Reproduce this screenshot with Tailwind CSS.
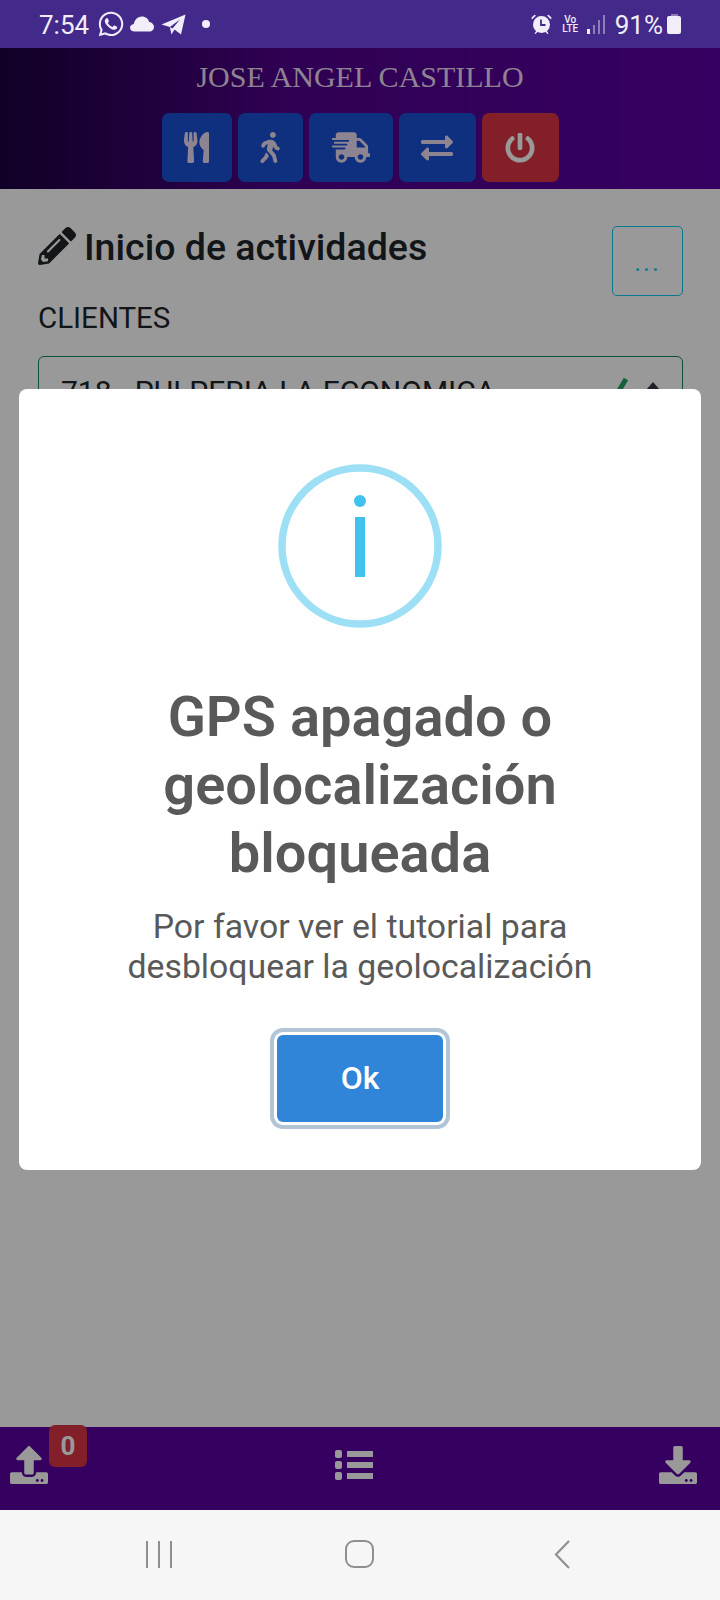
<!DOCTYPE html>
<html>
<head>
    <meta charset="UTF-8" />
    <title>Inicio de actividades</title>
    <script src="https://cdn.jsdelivr.net/npm/@tailwindcss/browser@4"></script>
</head>
<body class="flex flex-col h-[1600px] w-[720px] overflow-hidden bg-white font-['Roboto',sans-serif]">

    <!-- Status bar -->
    <div class="h-12 shrink-0 bg-[#432a8a] flex items-center text-[#f1edf9]">
        <span class="ml-[39px] mt-[2px] text-[26px] leading-none font-normal">7:54</span>
        <svg class="ml-[9px] w-[26px] h-[28px]" viewBox="0 0 448 512" fill="currentColor"><path d="M380.9 97.1C339 55.1 283.2 32 223.9 32c-122.4 0-222 99.6-222 222 0 39.1 10.2 77.3 29.6 111L0 480l117.7-30.9c32.4 17.7 68.9 27 106.1 27h.1c122.3 0 224.1-99.6 224.1-222 0-59.3-25.2-115-67.1-157zm-157 341.6c-33.2 0-65.7-8.9-94-25.7l-6.7-4-69.8 18.3L72 359.2l-4.4-7c-18.5-29.4-28.2-63.3-28.2-98.2 0-101.7 82.8-184.5 184.6-184.5 49.3 0 95.6 19.2 130.4 54.1 34.8 34.9 56.2 81.2 56.1 130.5 0 101.8-84.9 184.6-186.6 184.6zm101.2-138.2c-5.5-2.8-32.8-16.2-37.9-18-5.1-1.9-8.8-2.8-12.5 2.8-3.7 5.6-14.3 18-17.6 21.8-3.2 3.7-6.5 4.2-12 1.4-32.6-16.3-54-29.1-75.5-66-5.7-9.8 5.7-9.1 16.3-30.3 1.8-3.7.9-6.9-.5-9.7-1.4-2.8-12.5-30.1-17.1-41.2-4.5-10.8-9.1-9.3-12.5-9.5-3.2-.2-6.9-.2-10.6-.2-3.7 0-9.7 1.4-14.8 6.9-5.1 5.6-19.4 19-19.4 46.3 0 27.3 19.9 53.7 22.6 57.4 2.8 3.7 39.1 59.7 94.8 83.8 35.2 15.2 49 16.5 66.6 13.9 10.7-1.6 32.8-13.4 37.4-26.4 4.6-13 4.6-24.1 3.2-26.4-1.3-2.5-5-3.9-10.5-6.6z"/></svg>
        <svg class="ml-[6px] w-[24px] h-[16px]" viewBox="0 0 24 16" fill="currentColor"><path d="M4.5 15.5C2 15.5 0 13.800 0 11.700 0 9.700 1.700 8.200 3.800 8 4.500 3.500 8 .5 12 .5c3.500 0 6.300 2.300 7.200 5.500 2.700.2 4.800 2.600 4.800 5 0 2.400-2 4.500-4.600 4.500z"/></svg>
        <svg class="ml-[7px] w-[25px] h-[21px]" viewBox="0 0 25 21" fill="currentColor"><path d="M24.500.500 20 20.500 13.500 15.500 10.500 20.500 8.800 13 .5 10.500zM8.800 13 19 5.500 11.500 14.500z" fill-rule="evenodd"/></svg>
        <span class="ml-[16px] w-2 h-2 rounded-full bg-[#f1edf9]"></span>

        <svg class="ml-auto w-[21px] h-[20px]" viewBox="0 0 21 20" fill="currentColor"><path d="M1 5.500 5 1.500 3.500.8.500 3.500zM20 5.500 16 1.500 17.500.8 20.500 3.500z"/><circle cx="10.500" cy="10.500" r="8.500"/><path d="M3.500 19.500 5.500 16.500 7 17.500 4.500 20zM17.500 19.500 15.500 16.500 14 17.500 16.500 20z"/><path d="M10 5.500v5.500h4.500" fill="none" stroke="#432a8a" stroke-width="1.800"/></svg>
        <div class="ml-[9px] w-[19px] flex flex-col items-center text-[10px] leading-[9px] font-medium"><span>Vo</span><span>LTE</span></div>
        <div class="ml-[7px] flex items-end gap-[3px] h-[19px]">
            <span class="w-[3px] h-[5px] bg-[#f1edf9]"></span>
            <span class="w-[2px] h-[9px] bg-[#8d7db8]"></span>
            <span class="w-[2px] h-[14px] bg-[#8d7db8]"></span>
            <span class="w-[2px] h-[19px] bg-[#8d7db8]"></span>
        </div>
        <span class="ml-[10px] mt-[2px] text-[26px] leading-none">91%</span>
        <div class="ml-[4px] mr-[39px] flex flex-col items-center">
            <span class="w-[7px] h-[2px] bg-[#8d7db8]"></span>
            <span class="w-[14px] h-[18px] rounded-[2px] bg-[#f1edf9]"></span>
        </div>
    </div>

    <!-- App -->
    <div class="relative flex-1 flex flex-col min-h-0">
        <header class="h-[141px] shrink-0 bg-linear-to-r from-[#1c0040] via-[#50008c] via-40% to-[#5b00a3] flex flex-col items-center">
            <h1 class="mt-[5px] h-[47px] text-[30px] leading-[47px] text-[#ecdcf4] font-['Liberation_Serif',serif]">JOSE ANGEL CASTILLO</h1>
            <div class="mt-[13px] flex gap-[6px] text-[#ecdcf4]">
                <button class="w-[70px] h-[69px] rounded-[7px] bg-[#1a50d4] flex items-center justify-center">
                    <svg class="w-[25px] h-[31px]" viewBox="0 0 416 512" fill="currentColor" preserveAspectRatio="none"><path d="M207.9 15.2c.8 4.700 16.100 94.500 16.100 128.800 0 52.300-27.800 89.600-68.900 104.600L168 486.700c.7 13.700-10.200 25.300-24 25.300H80c-13.700 0-24.700-11.500-24-25.300l12.900-238.100C27.700 233.600 0 196.200 0 144 0 109.600 15.300 19.900 16.100 15.200 19.300-5.100 61.400-5.400 64 16.300v141.200c1.300 3.400 15.100 3.200 16 0 1.400-25.300 7.900-139.200 8-141.800 3.300-20.800 44.700-20.800 47.900 0 .2 2.700 6.600 116.500 8 141.800.9 3.200 14.800 3.400 16 0V16.300c2.600-21.600 44.800-21.400 48-1.100zm119.200 285.700l-15 185.100c-1.200 14 9.900 26 23.900 26h56c13.300 0 24-10.700 24-24V24c0-13.200-10.700-24-24-24-82.500 0-221.400 178.500-64.900 300.900z"/></svg>
                </button>
                <button class="w-[65px] h-[69px] rounded-[7px] bg-[#1a50d4] flex items-center justify-center">
                    <svg class="w-[20px] h-[31px]" viewBox="0 0 320 512" fill="currentColor"><path d="M208 96c26.500 0 48-21.500 48-48S234.500 0 208 0s-48 21.500-48 48 21.500 48 48 48zm94.500 149.100l-23.300-11.800-9.700-29.400c-14.700-44.600-55.700-75.800-102.200-75.900-36-.1-55.900 10.100-93.300 25.200-21.600 8.700-39.300 25.200-49.700 46.200L17.600 213c-7.800 15.800-1.500 35 14.200 42.900 15.600 7.900 34.600 1.500 42.500-14.300L81 228c3.500-7 9.300-12.500 16.500-15.400l26.800-10.800-15.200 60.700c-5.200 20.800.4 42.900 14.900 58.800l59.900 65.400c7.200 7.900 12.300 17.400 14.900 27.700l18.300 73.300c4.300 17.100 21.700 27.600 38.800 23.300 17.100-4.300 27.600-21.700 23.300-38.800l-22.200-89c-2.600-10.300-7.700-19.900-14.900-27.700l-45.500-49.700 17.200-68.700 5.500 16.500c5.300 16.100 16.700 29.400 31.700 37l23.300 11.800c15.600 7.900 34.600 1.500 42.500-14.300 7.700-15.700 1.400-35.100-14.300-43zM73.600 385.800c-3.200 8.100-8 15.400-14.200 21.500l-50 50.100c-12.500 12.500-12.500 32.800 0 45.300s32.700 12.500 45.200 0l59.400-59.400c6.100-6.100 10.900-13.400 14.200-21.500l13.500-33.800c-55.300-60.300-38.700-41.800-47.400-53.700l-20.700 51.500z"/></svg>
                </button>
                <button class="w-[84px] h-[69px] rounded-[7px] bg-[#1a50d4] flex items-center justify-center">
                    <svg class="w-[38px] h-[31px]" viewBox="0 0 640 512" fill="currentColor"><path d="M624 352h-16V243.900c0-12.700-5.100-24.900-14.100-33.900L494 110.100c-9-9-21.200-14.100-33.900-14.100H416V48c0-26.500-21.500-48-48-48H112C85.500 0 64 21.500 64 48v48H8c-4.400 0-8 3.600-8 8v16c0 4.400 3.600 8 8 8h272c4.400 0 8 3.600 8 8v16c0 4.400-3.600 8-8 8H40c-4.400 0-8 3.600-8 8v16c0 4.400 3.600 8 8 8h208c4.400 0 8 3.600 8 8v16c0 4.400-3.600 8-8 8H8c-4.400 0-8 3.600-8 8v16c0 4.400 3.600 8 8 8h208c4.400 0 8 3.600 8 8v16c0 4.400-3.600 8-8 8H64v128c0 53 43 96 96 96s96-43 96-96h128c0 53 43 96 96 96s96-43 96-96h48c8.800 0 16-7.200 16-16v-32c0-8.800-7.200-16-16-16zM160 464c-26.500 0-48-21.500-48-48s21.500-48 48-48 48 21.500 48 48-21.500 48-48 48zm320 0c-26.500 0-48-21.500-48-48s21.500-48 48-48 48 21.500 48 48-21.500 48-48 48zm80-208H416V144h44.100l99.900 99.900V256z"/></svg>
                </button>
                <button class="w-[77px] h-[69px] rounded-[7px] bg-[#1a50d4] flex items-center justify-center">
                    <svg class="w-[32px] h-[32px]" viewBox="0 0 512 512" fill="currentColor"><path d="M0 168v-16c0-13.255 10.745-24 24-24h360V80c0-21.367 25.899-32.042 40.971-16.971l80 80c9.372 9.373 9.372 24.569 0 33.941l-80 80C409.956 271.982 384 261.456 384 240v-48H24c-13.255 0-24-10.745-24-24zm488 152H128v-48c0-21.314-25.862-32.080-40.971-16.971l-80 80c-9.372 9.373-9.372 24.569 0 33.941l80 80C102.057 463.997 128 453.437 128 432v-48h360c13.255 0 24-10.745 24-24v-16c0-13.255-10.745-24-24-24z"/></svg>
                </button>
                <button class="w-[77px] h-[69px] rounded-[7px] bg-[#da3545] flex items-center justify-center">
                    <svg class="w-[30px] h-[30px] text-white" viewBox="0 0 512 512" fill="currentColor"><path d="M400 54.100c63 45 104 118.600 104 201.900 0 136.800-110.800 247.700-247.500 248C120 504.300 8.200 393 8 256.400 7.900 173.100 48.900 99.300 111.800 54.200c11.700-8.300 28-4.800 35 7.700L162.600 90c5.900 10.500 3.100 23.800-6.600 31-41.500 30.800-68 79.600-68 134.900-.1 92.300 74.500 168.100 168 168.100 91.600 0 168.600-74.200 168-169.100-.3-51.800-24.700-101.800-68.100-134-9.700-7.200-12.400-20.500-6.500-30.900l15.800-28.100c7-12.400 23.200-16.100 34.800-7.800zM296 264V24c0-13.300-10.700-24-24-24h-32c-13.300 0-24 10.700-24 24v240c0 13.300 10.700 24 24 24h32c13.300 0 24-10.700 24-24z"/></svg>
                </button>
            </div>
        </header>

        <main class="flex-1 min-h-0 bg-white pl-[38px] pr-[37px]">
            <div class="flex justify-between mt-[37px]">
                <div class="flex items-start">
                    <svg class="mt-[1px] w-[38px] h-[38px] text-[#212529]" viewBox="0 0 512 512" fill="currentColor"><path d="M497.900 142.100l-46.100 46.100c-4.700 4.700-12.300 4.700-17 0l-111-111c-4.700-4.700-4.700-12.300 0-17l46.100-46.100c18.700-18.700 49.100-18.700 67.900 0l60.100 60.100c18.800 18.700 18.800 49.100 0 67.900zM284.200 99.800L21.600 362.400.4 483.900c-2.900 16.400 11.400 30.600 27.800 27.800l121.500-21.300 262.600-262.600c4.700-4.700 4.700-12.300 0-17l-111-111c-4.800-4.700-12.400-4.700-17.100 0zM124.100 339.900c-5.500-5.500-5.500-14.300 0-19.800l154-154c5.500-5.500 14.300-5.500 19.800 0s5.500 14.300 0 19.800l-154 154c-5.500 5.500-14.300 5.500-19.800 0zM88 424h48v36.300l-64.500 11.300-31.100-31.100L51.700 376H88v48z"/></svg>
                    <h2 class="ml-[8px] text-[37.500px] leading-[42px] font-medium text-[#212529]">Inicio de actividades</h2>
                </div>
                <button class="w-[71px] h-[70px] border border-[#0dcaf0] rounded-[5px] text-[#0dcaf0] text-[26px] tracking-[2px] leading-[70px]">...</button>
            </div>
            <p class="mt-[1px] text-[29.500px] leading-[42px] text-[#212529]">CLIENTES</p>
            <div class="relative mt-[17px] h-[70px] border border-[#198754] rounded-[6px] pl-[22px] flex items-center text-[30px] text-[#212529]">
                718 - PULPERIA LA ECONOMICA
                <svg class="absolute right-[54px] top-[20px] w-[22px] h-[24px]" viewBox="0 0 22 24" fill="none" stroke="#20a060" stroke-width="5"><path d="M2 17l6 5L20 2"/></svg>
                <span class="absolute right-[22px] top-[25px] w-0 h-0 border-x-[7px] border-x-transparent border-b-[8px] border-b-[#343a40]"></span>
            </div>
        </main>

        <footer class="relative h-[83px] shrink-0 bg-[#5a00a0] flex items-start justify-between px-[10px] pt-[19px] text-white">
            <svg class="w-[38px] h-[38px]" viewBox="0 0 512 512" fill="currentColor"><path d="M296 384h-80c-13.300 0-24-10.700-24-24V192h-87.700c-17.800 0-26.700-21.500-14.100-34.100L242.300 5.700c7.500-7.500 19.800-7.500 27.300 0l152.200 152.200c12.600 12.600 3.700 34.100-14.100 34.100H320v168c0 13.300-10.700 24-24 24zm216-8v112c0 13.300-10.700 24-24 24H24c-13.300 0-24-10.700-24-24V376c0-13.300 10.700-24 24-24h136v8c0 30.900 25.100 56 56 56h80c30.900 0 56-25.100 56-56v-8h136c13.300 0 24 10.700 24 24zm-124 88c0-11-9-20-20-20s-20 9-20 20 9 20 20 20 20-9 20-20zm64 0c0-11-9-20-20-20s-20 9-20 20 9 20 20 20 20-9 20-20z"/></svg>
            <span class="absolute left-[49px] -top-[2px] w-[38px] h-[42px] rounded-[6px] bg-[#da3545] flex items-center justify-center text-[26px] font-bold">0</span>
            <div class="mt-[4px] w-[38px] h-[30px] flex flex-col justify-between">
                <div class="flex items-center gap-[5px]"><span class="w-[7px] h-[8px] rounded-[2px] bg-white"></span><span class="flex-1 h-[6px] bg-white"></span></div>
                <div class="flex items-center gap-[5px]"><span class="w-[7px] h-[8px] rounded-[2px] bg-white"></span><span class="flex-1 h-[6px] bg-white"></span></div>
                <div class="flex items-center gap-[5px]"><span class="w-[7px] h-[8px] rounded-[2px] bg-white"></span><span class="flex-1 h-[6px] bg-white"></span></div>
            </div>
            <svg class="w-[38px] h-[38px] mr-[13px]" viewBox="0 0 512 512" fill="currentColor"><path d="M216 0h80c13.300 0 24 10.700 24 24v168h87.700c17.800 0 26.700 21.500 14.100 34.100L269.700 378.300c-7.500 7.500-19.800 7.500-27.300 0L90.100 226.100c-12.600-12.600-3.700-34.100 14.100-34.100H192V24c0-13.300 10.700-24 24-24zm296 376v112c0 13.300-10.700 24-24 24H24c-13.300 0-24-10.700-24-24V376c0-13.300 10.700-24 24-24h146.700l49 49c20.100 20.100 52.500 20.100 72.600 0l49-49H488c13.300 0 24 10.700 24 24zm-124 88c0-11-9-20-20-20s-20 9-20 20 9 20 20 20 20-9 20-20zm64 0c0-11-9-20-20-20s-20 9-20 20 9 20 20 20 20-9 20-20z"/></svg>
        </footer>

        <!-- Modal overlay -->
        <div class="absolute inset-0 bg-black/40 flex items-center justify-center">
            <div class="w-[682px] h-[781px] bg-white rounded-[8px] flex flex-col items-center text-[#595959]">
                <svg class="mt-[75px] w-[164px] h-[164px]" viewBox="0 0 164 164" fill="none">
                    <circle cx="82" cy="82" r="78" stroke="#9de0f6" stroke-width="7.500"/>
                    <circle cx="82" cy="37" r="6" fill="#3fc3ee"/>
                    <rect x="77" y="53" width="10" height="60" fill="#3fc3ee"/>
                </svg>
                <h3 class="mt-[55px] w-[560px] text-center text-[56px] leading-[68px] font-semibold">GPS apagado o geolocalización bloqueada</h3>
                <p class="mt-[20px] w-[500px] text-center text-[33.800px] leading-[40px]">Por favor ver el tutorial para desbloquear la geolocalización</p>
                <button class="mt-[48px] w-[166px] h-[87px] rounded-[6px] bg-[#3085d9] text-white text-[32px] font-medium ring-[3px] ring-white shadow-[0_0_0_7px_rgba(100,140,175,0.5)]">Ok</button>
            </div>
        </div>
    </div>

    <!-- Android nav bar -->
    <div class="h-[90px] shrink-0 bg-[#f6f6f6] flex items-start text-[#8f8f8f]">
        <div class="ml-[146px] mt-[31px] w-[26px] h-[27px] flex justify-between">
            <span class="w-[2px] bg-[#8f8f8f]"></span><span class="w-[2px] bg-[#8f8f8f]"></span><span class="w-[2px] bg-[#8f8f8f]"></span>
        </div>
        <span class="ml-[173px] mt-[30px] w-[29px] h-[28px] border-[2.5px] border-[#8f8f8f] rounded-[9px]"></span>
        <svg class="ml-[180px] mt-[30px] w-[16px] h-[29px]" viewBox="0 0 16 29" fill="none" stroke="currentColor" stroke-width="2.200"><path d="M15 1 2 14.500 15 28"/></svg>
    </div>

</body>
</html>
